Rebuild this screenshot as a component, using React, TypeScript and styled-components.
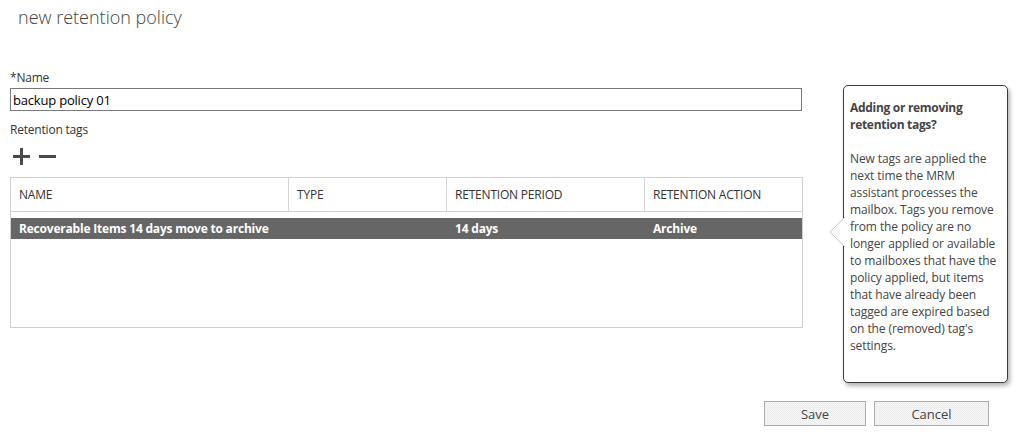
import styled, { createGlobalStyle } from "styled-components";

const GlobalStyle = createGlobalStyle`
  html, body {
    margin: 0;
    padding: 0;
    background: #ffffff;
  }
  body {
    font-family: "Open Sans", "Noto Sans", "Liberation Sans", sans-serif;
    color: #333333;
  }
`;

const Page = styled.div`
  width: 1022px;
  height: 437px;
  box-sizing: border-box;
  padding: 0 15px 0 10px;
  display: flex;
  flex-direction: column;
`;

const Title = styled.h1`
  margin: 0 0 0 8px;
  font-size: 18px;
  font-weight: 300;
  line-height: 34px;
  color: #444444;
  letter-spacing: 0;
`;

const Content = styled.div`
  display: flex;
  align-items: flex-start;
  gap: 40px;
  margin-top: 36px;
`;

const Form = styled.div`
  width: 793px;
  flex-shrink: 0;
  display: flex;
  flex-direction: column;
`;

const Label = styled.label`
  font-size: 12px;
  line-height: 16px;
  color: #333333;
  letter-spacing: -0.2px;
`;

const TextInput = styled.input`
  box-sizing: border-box;
  width: 792px;
  height: 23px;
  margin: 2px 0 11px;
  padding: 0 2px;
  border: 1px solid #7a7a7a;
  font-family: inherit;
  font-size: 13px;
  color: #000000;
  letter-spacing: -0.2px;
  outline: none;
`;

const Toolbar = styled.div`
  display: flex;
  gap: 9px;
  height: 20px;
  align-items: center;
  margin: 8px 0 11px 3px;
`;

const IconButton = styled.button`
  border: none;
  background: none;
  padding: 0;
  width: 17px;
  height: 17px;
  display: flex;
  align-items: center;
  justify-content: center;
  cursor: pointer;
`;

const Table = styled.div`
  border: 1px solid #cfcfcf;
  height: 151px;
  box-sizing: border-box;
`;

const HeaderRow = styled.div`
  display: grid;
  grid-template-columns: 278px 158px 198px 1fr;
  height: 33px;
  border-bottom: 1px solid #d4d4d4;
`;

const HeaderCell = styled.div<{ $last?: boolean }>`
  display: flex;
  align-items: center;
  padding-left: 8px;
  font-size: 12px;
  color: #333333;
  letter-spacing: -0.2px;
  border-right: ${({ $last }) => ($last ? "none" : "1px solid #d4d4d4")};
`;

const Row = styled.div<{ $selected?: boolean }>`
  display: grid;
  grid-template-columns: 278px 158px 198px 1fr;
  height: 21px;
  margin-top: 6px;
  background: ${({ $selected }) => ($selected ? "#666666" : "transparent")};
  color: ${({ $selected }) => ($selected ? "#ffffff" : "#333333")};
`;

const Cell = styled.div`
  display: flex;
  align-items: center;
  padding-left: 8px;
  font-size: 12px;
  font-weight: 700;
  letter-spacing: -0.2px;
  white-space: nowrap;
`;

const Callout = styled.aside`
  position: relative;
  flex-shrink: 0;
  box-sizing: border-box;
  width: 165px;
  height: 298px;
  margin-top: 15px;
  padding: 13px 6px 0 6px;
  border: 1px solid #3c3c3c;
  border-radius: 5px;
  background: #ffffff;
  box-shadow: 2px 3px 4px rgba(0, 0, 0, 0.3);
`;

const Pointer = styled.svg`
  position: absolute;
  left: -15px;
  top: 131px;
`;

const CalloutTitle = styled.div`
  font-size: 12px;
  font-weight: 700;
  line-height: 17px;
  color: #444444;
  letter-spacing: -0.3px;
  margin-bottom: 17px;
`;

const CalloutText = styled.p`
  margin: 0;
  font-size: 12px;
  line-height: 17px;
  color: #444444;
  letter-spacing: -0.1px;
`;

const Footer = styled.div`
  display: flex;
  justify-content: flex-end;
  gap: 8px;
  margin: 18px 18px 0 0;
`;

const Button = styled.button<{ $width: number }>`
  box-sizing: border-box;
  width: ${({ $width }) => `${$width}px`};
  height: 25px;
  border: 1px solid #ababab;
  background: repeating-conic-gradient(#ececec 0 25%, #f6f6f6 0 50%) 0 0 / 2px 2px;
  font-family: inherit;
  font-size: 13px;
  color: #444444;
  cursor: pointer;
`;

const columns = ["NAME", "TYPE", "RETENTION PERIOD", "RETENTION ACTION"];

export default function App() {
  return (
    <Page>
      <GlobalStyle />
      <Title>new retention policy</Title>
      <Content>
        <Form>
          <Label>*Name</Label>
          <TextInput defaultValue="backup policy 01" />
          <Label>Retention tags</Label>
          <Toolbar>
            <IconButton aria-label="add">
              <svg width="17" height="17" viewBox="0 0 17 17">
                <rect x="0" y="7" width="17" height="3" fill="#4a4a4a" />
                <rect x="7" y="0" width="3" height="17" fill="#4a4a4a" />
              </svg>
            </IconButton>
            <IconButton aria-label="remove">
              <svg width="17" height="17" viewBox="0 0 17 17">
                <rect x="0" y="7" width="17" height="3" fill="#4a4a4a" />
              </svg>
            </IconButton>
          </Toolbar>
          <Table>
            <HeaderRow>
              {columns.map((c, i) => (
                <HeaderCell key={c} $last={i === columns.length - 1}>
                  {c}
                </HeaderCell>
              ))}
            </HeaderRow>
            <Row $selected>
              <Cell>Recoverable Items 14 days move to archive</Cell>
              <Cell />
              <Cell>14 days</Cell>
              <Cell>Archive</Cell>
            </Row>
          </Table>
        </Form>
        <Callout>
          <Pointer width="16" height="30" viewBox="0 0 16 30">
            <polygon points="16,0 1,15 16,30" fill="#ffffff" stroke="#c8c8c8" strokeWidth="1" />
            <rect x="15" y="1" width="2" height="28" fill="#ffffff" />
          </Pointer>
          <CalloutTitle>Adding or removing retention tags?</CalloutTitle>
          <CalloutText>
            New tags are applied the next time the MRM assistant processes the
            mailbox. Tags you remove from the policy are no longer applied or
            available to mailboxes that have the policy applied, but items that
            have already been tagged are expired based on the (removed) tag's
            settings.
          </CalloutText>
        </Callout>
      </Content>
      <Footer>
        <Button $width={102}>Save</Button>
        <Button $width={115}>Cancel</Button>
      </Footer>
    </Page>
  );
}
